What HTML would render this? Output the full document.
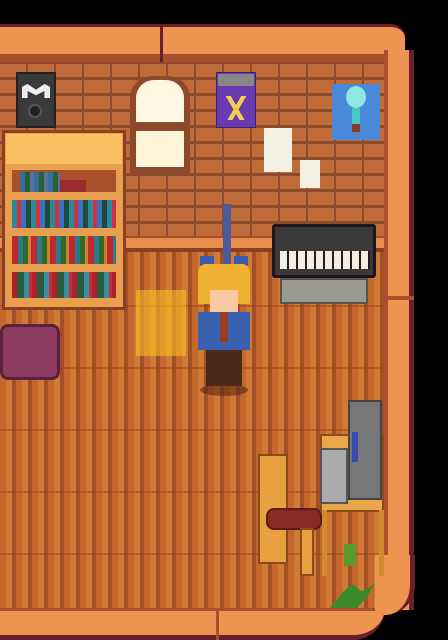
<!DOCTYPE html><html><head><style>
body{margin:0;width:448px;height:640px;background:#000;position:relative;overflow:hidden;font-family:"Liberation Sans",sans-serif}
div{position:absolute;box-sizing:border-box}
</style></head><body>
<!-- floor -->
<div style="left:0;top:250px;width:388px;height:365px;background:repeating-linear-gradient(90deg,#c4682c 0 6px,#d07a36 6px 12px,#a24e26 12px 16px),#c9722f"></div>
<div style="left:0;top:250px;width:388px;height:365px;background:repeating-linear-gradient(0deg,transparent 0 60px,rgba(150,70,30,.5) 60px 62px)"></div>
<!-- wall bricks -->
<div style="left:0;top:60px;width:388px;height:180px;background:repeating-linear-gradient(0deg,#8c4a2e 0 3px,transparent 3px 16px),repeating-linear-gradient(90deg,#c06c3a 0 26px,#8c4a2e 26px 28px),#c06c3a"></div>
<!-- wainscot -->
<div style="left:0;top:236px;width:388px;height:16px;background:#e88e48;border-top:2px solid #a84e2c;border-bottom:4px solid #8c3e24"></div>
<!-- top beam -->
<div style="left:0;top:24px;width:405px;height:38px;background:#ec9450;border-top:3px solid #6a1f2e;border-bottom:8px solid #a8502c;border-top-right-radius:14px"></div>
<div style="left:160px;top:24px;width:3px;height:38px;background:#6a1f2e"></div>
<!-- right beam -->
<div style="left:384px;top:50px;width:30px;height:560px;background:#ec9450;border-left:4px solid #a8502c;border-right:5px solid #6a1f2e"></div>
<div style="left:388px;top:296px;width:26px;height:4px;background:#a8502c"></div>
<div style="left:414px;top:30px;width:34px;height:610px;background:#000"></div>
<!-- bottom beam -->
<div style="left:0;top:608px;width:385px;height:32px;background:#ec9450;border-top:3px solid #a8502c;border-bottom:5px solid #6a1f2e;border-bottom-right-radius:40px"></div>
<div style="left:216px;top:608px;width:3px;height:32px;background:#a8502c"></div>
<div style="left:375px;top:555px;width:40px;height:60px;background:#ec9450;border-right:5px solid #6a1f2e;border-bottom-right-radius:30px"></div>
<!-- speaker -->
<div style="left:16px;top:72px;width:40px;height:56px;background:#3a3a3a;border:2px solid #222"></div>
<div style="left:22px;top:84px;width:28px;height:14px;background:#eee;clip-path:polygon(0 100%,0 20%,20% 0,50% 40%,80% 0,100% 20%,100% 100%,80% 100%,80% 50%,50% 80%,20% 50%,20% 100%)"></div>
<div style="left:28px;top:104px;width:14px;height:14px;border-radius:50%;background:#222;border:2px solid #555"></div>
<!-- window -->
<div style="left:130px;top:76px;width:60px;height:100px;background:#8c4a2a;border-radius:22px 22px 0 0"></div>
<div style="left:136px;top:80px;width:48px;height:42px;background:#fff8e2;border-radius:18px 18px 0 0"></div>
<div style="left:136px;top:131px;width:48px;height:36px;background:#fff5d8"></div>
<!-- purple poster -->
<div style="left:216px;top:72px;width:40px;height:56px;background:#6a3ab0;border:1px solid #3a2270"></div>
<div style="left:218px;top:74px;width:36px;height:12px;background:#888"></div>
<div style="left:226px;top:96px;width:20px;height:24px;background:linear-gradient(60deg,transparent 40%,#f0d050 40% 55%,transparent 55%),linear-gradient(-60deg,transparent 40%,#f0d050 40% 55%,transparent 55%)"></div>
<!-- notes -->
<div style="left:264px;top:128px;width:28px;height:44px;background:#f4f0e4"></div>
<div style="left:300px;top:160px;width:20px;height:28px;background:#f4f0e4"></div>
<!-- balloon poster -->
<div style="left:332px;top:84px;width:48px;height:56px;background:#4a88d8"></div>
<div style="left:346px;top:86px;width:20px;height:22px;border-radius:50%;background:#8ee8e0"></div>
<div style="left:352px;top:108px;width:8px;height:16px;background:#4ac8c8"></div>
<div style="left:352px;top:124px;width:8px;height:8px;background:#8a3a20"></div>
<!-- bookshelf -->
<div style="left:2px;top:130px;width:124px;height:180px;background:#e8a050;border:3px solid #8a3e24"></div>
<div style="left:6px;top:134px;width:116px;height:30px;background:#f8c060"></div>
<div style="left:12px;top:170px;width:104px;height:22px;background:#a8502c"></div>
<div style="left:20px;top:172px;width:40px;height:20px;background:repeating-linear-gradient(90deg,#3a6aa0 0 5px,#2a6030 5px 10px,#5a70a0 10px 14px)"></div>
<div style="left:60px;top:180px;width:26px;height:12px;background:#9a2a30"></div>
<div style="left:12px;top:200px;width:104px;height:28px;background:repeating-linear-gradient(90deg,#2a8a9a 0 5px,#d03040 5px 9px,#3a70c0 9px 14px,#204a3a 14px 19px)"></div>
<div style="left:12px;top:236px;width:104px;height:28px;background:repeating-linear-gradient(90deg,#c02830 0 6px,#2a7a8a 6px 11px,#306a2a 11px 16px,#d08030 16px 19px)"></div>
<div style="left:12px;top:272px;width:104px;height:26px;background:repeating-linear-gradient(90deg,#b02028 0 5px,#2a5a40 5px 12px,#3a90a0 12px 17px,#c03040 17px 20px)"></div>
<!-- keyboard -->
<div style="left:272px;top:224px;width:104px;height:54px;background:#3a3a3a;border:3px solid #1e1420;border-radius:3px"></div>
<div style="left:280px;top:251px;width:90px;height:18px;background:repeating-linear-gradient(90deg,#f4eee0 0 7px,#2a1a20 7px 9px)"></div>
<div style="left:280px;top:278px;width:88px;height:26px;background:#9a9a90;border:2px solid #555"></div>
<!-- light patch -->
<div style="left:136px;top:290px;width:50px;height:66px;background:rgba(255,200,40,.55)"></div>
<!-- rug -->
<div style="left:0;top:324px;width:60px;height:56px;background:#8c3a5e;border:3px solid #5a2040;border-radius:8px"></div>
<!-- character -->
<div style="left:223px;top:204px;width:8px;height:60px;background:#4a5a9a"></div>
<div style="left:200px;top:256px;width:14px;height:10px;background:#3a5ab0"></div>
<div style="left:234px;top:256px;width:14px;height:10px;background:#3a5ab0"></div>
<div style="left:198px;top:264px;width:52px;height:40px;background:#f0b030;border-radius:8px 8px 2px 2px"></div>
<div style="left:210px;top:290px;width:28px;height:22px;background:#f8c8a0"></div>
<div style="left:198px;top:312px;width:52px;height:38px;background:#3a60b0"></div>
<div style="left:220px;top:312px;width:8px;height:30px;background:#9a3a20"></div>
<div style="left:206px;top:350px;width:36px;height:36px;background:#4a2a1a"></div>
<div style="left:200px;top:384px;width:48px;height:12px;background:rgba(90,40,20,.6);border-radius:50%"></div>
<!-- chair -->
<div style="left:258px;top:454px;width:30px;height:110px;background:#e8a040;border:2px solid #8a4a1a"></div>
<div style="left:266px;top:508px;width:56px;height:22px;background:#8a2a28;border:2px solid #5a1a18;border-radius:8px"></div>
<div style="left:300px;top:528px;width:14px;height:48px;background:#e8a040;border:2px solid #8a4a1a"></div>
<!-- desk -->
<div style="left:320px;top:434px;width:64px;height:78px;background:#e8a848;border:2px solid #8a4a1a"></div>
<div style="left:322px;top:510px;width:62px;height:66px;border-left:5px solid #d08a30;border-right:5px solid #d08a30"></div>
<div style="left:320px;top:448px;width:28px;height:56px;background:#aaa;border:2px solid #555"></div>
<div style="left:348px;top:400px;width:34px;height:100px;background:#777;border:2px solid #444"></div>
<div style="left:352px;top:432px;width:6px;height:30px;background:#3a4ab0"></div>
<!-- plants -->
<div style="left:344px;top:544px;width:12px;height:22px;background:#5a9a2a"></div>
<div style="left:330px;top:584px;width:45px;height:24px;background:#3a8a2a;clip-path:polygon(0 100%,30% 30%,50% 0,70% 30%,100% 0,80% 60%,60% 100%)"></div>
</body></html>
